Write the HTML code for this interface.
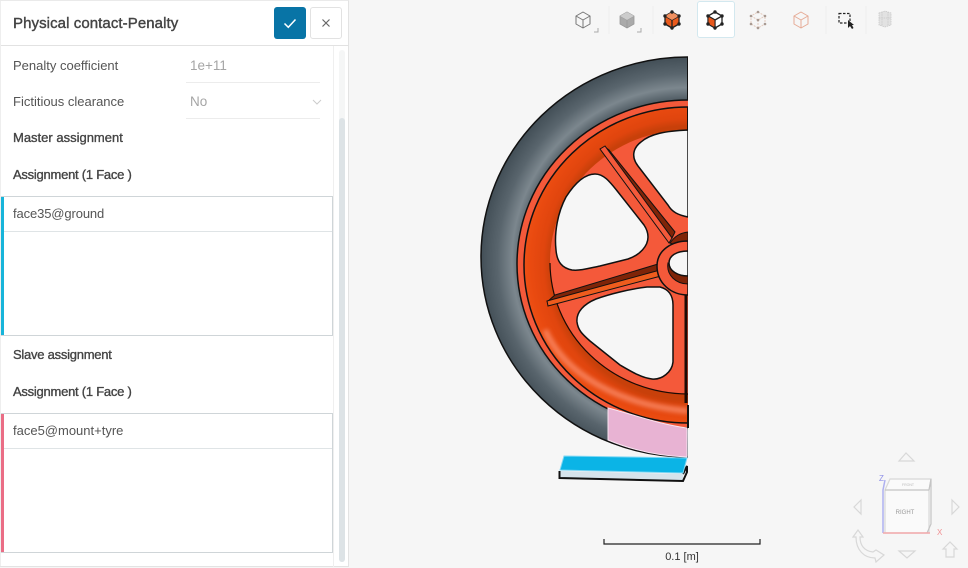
<!DOCTYPE html>
<html><head><meta charset="utf-8">
<style>
html,body{margin:0;padding:0;width:968px;height:568px;overflow:hidden;background:#f6f6f6;font-family:"Liberation Sans",sans-serif;color:#555}
.abs{position:absolute}
#panel{left:0;top:0;width:349px;height:567px;background:#fff;border-right:1px solid #e3e3e3;border-bottom:1px solid #e3e3e3;border-top:1px solid #eaeaea;box-sizing:border-box;box-shadow:inset 1px 0 0 #eee}
.t{position:absolute;left:13px;font-size:13px;line-height:16px;white-space:nowrap}
.b{color:#444;-webkit-text-stroke:.35px #444}
.n{letter-spacing:-.25px}
.f{letter-spacing:-.12px}
.v{position:absolute;left:190px;font-size:13.500px;line-height:16px;color:#a5a5a5}
.l{position:absolute;left:186px;width:134px;height:1px;background:#ececec}
.box{position:absolute;left:1px;width:332px;height:140px;box-sizing:border-box;border:1px solid #cfd5d8;border-left:0;background:#fff}
.bar{position:absolute;left:0;top:0;bottom:0;width:3px}
.sep{position:absolute;left:3px;right:0;top:34px;height:1px;background:#dfe4e6}
</style></head><body>
<div id="panel" class="abs"></div>
<div class="abs" style="left:333px;top:46px;width:1px;height:521px;background:#efefef"></div>
<div class="abs" style="left:339px;top:50px;width:6px;height:512px;background:#f5f6f6;border-radius:3px"></div>
<div class="abs" style="left:339px;top:118px;width:6px;height:444px;background:#dde3e6;border-radius:3px"></div>
<div class="abs" style="left:1px;top:45px;width:348px;height:1px;background:#e2e2e2"></div>
<div class="abs" style="left:13px;top:15px;font-size:15px;line-height:18px;color:#444;-webkit-text-stroke:.4px #444;white-space:nowrap;letter-spacing:.08px">Physical contact-Penalty</div>
<div class="abs" style="left:274px;top:7px;width:32px;height:32px;background:#0874a6;border-radius:3px"><svg width="32" height="32"><path d="M10.500 16.500 14.300 20.300 21.500 12.500" fill="none" stroke="#fff" stroke-width="1.500"/></svg></div>
<div class="abs" style="left:310px;top:7px;width:32px;height:32px;box-sizing:border-box;background:#fff;border:1px solid #e2e2e2;border-radius:3px"><svg width="30" height="30"><path d="M11.500 11.500 18.500 18.500M18.500 11.500 11.500 18.500" fill="none" stroke="#666" stroke-width="1.200"/></svg></div>
<div class="t" style="top:58px">Penalty coefficient</div>
<div class="v" style="top:58px">1e+11</div><div class="l" style="top:82px"></div>
<div class="t" style="top:94px">Fictitious clearance</div>
<div class="v" style="top:94px">No</div><div class="l" style="top:118px"></div>
<svg class="abs" style="left:312px;top:99px" width="10" height="7"><path d="M1 1 5 5 9 1" fill="none" stroke="#ccc" stroke-width="1"/></svg>
<div class="t b" style="top:130px">Master assignment</div>
<div class="t b n" style="top:167px">Assignment (1 Face )</div>
<div class="box" style="top:196px"><div class="bar" style="background:#17b4da"></div><div class="sep"></div><div class="t f" style="left:12px;top:9px">face35@ground</div></div>
<div class="t b n" style="top:347px">Slave assignment</div>
<div class="t b n" style="top:384px">Assignment (1 Face )</div>
<div class="box" style="top:413px"><div class="bar" style="background:#ea6d85"></div><div class="sep"></div><div class="t" style="left:12px;top:9px">face5@mount+tyre</div></div>

<!-- toolbar -->
<div class="abs" style="left:697px;top:1px;width:38px;height:37px;box-sizing:border-box;background:#fff;border:1px solid #d3e8ef;border-radius:3px"></div>
<svg class="abs" style="left:560px;top:0" width="350" height="45">
<defs><g id="cube"><path d="M0-8 7-4V4L0 8-7 4V-4ZM-7-4 0 0 7-4M0 0V8" stroke-linejoin="round"/></g></defs>
<g stroke="#eee" stroke-width="1"><path d="M49 6V34M93 6V34M266 6V34M306 6V34"/></g>
<use href="#cube" x="23" y="20" fill="none" stroke="#777" stroke-width="1"/>
<path d="M38 28V32H34" fill="none" stroke="#aaa"/>
<use href="#cube" x="67" y="20" fill="#aaa" stroke="#999" stroke-width=".8"/>
<path d="M60 16 67 12 74 16 67 20Z" fill="#ccc"/>
<path d="M81 28V32H77" fill="none" stroke="#aaa"/>
<use href="#cube" x="112" y="20" fill="#ea5a1c" stroke="#222" stroke-width="1.300"/>
<path d="M105 16 112 12 119 16 112 20Z" fill="#f09060"/>
<g fill="#222"><circle cx="112" cy="12" r="1.700"/><circle cx="119" cy="16" r="1.700"/><circle cx="119" cy="24" r="1.700"/><circle cx="112" cy="28" r="1.700"/><circle cx="105" cy="24" r="1.700"/><circle cx="105" cy="16" r="1.700"/></g>
<use href="#cube" x="155" y="20" fill="#fff" stroke="#222" stroke-width="1.300"/>
<path d="M148 16 155 20V28L148 24Z" fill="#e8581c" stroke="#222"/>
<g fill="#222"><circle cx="155" cy="12" r="1.700"/><circle cx="162" cy="16" r="1.700"/><circle cx="162" cy="24" r="1.700"/><circle cx="155" cy="28" r="1.700"/><circle cx="148" cy="24" r="1.700"/><circle cx="148" cy="16" r="1.700"/></g>
<use href="#cube" x="198" y="20" fill="none" stroke="#e3cabd" stroke-width="1" stroke-dasharray="2 1"/>
<g fill="#a89a92"><circle cx="198" cy="12" r="1.300"/><circle cx="205" cy="16" r="1.300"/><circle cx="205" cy="24" r="1.300"/><circle cx="198" cy="28" r="1.300"/><circle cx="191" cy="24" r="1.300"/><circle cx="191" cy="16" r="1.300"/><circle cx="198" cy="20" r="1.300"/></g>
<use href="#cube" x="241" y="20" fill="none" stroke="#e6ab96" stroke-width="1"/>
<rect x="279" y="13.500" width="11" height="9.500" fill="none" stroke="#222" stroke-width="1.200" stroke-dasharray="2.500 1.500"/>
<path d="M288 20 288 28 290 26 292 29 293.500 28 292 25 294 25Z" fill="#222"/>
<g fill="#e2e2e2" stroke="#c8c8c8" stroke-width=".8" stroke-dasharray="1.500 .8"><path d="M319 13 325 11 331 13V25L325 27 319 25Z"/><path d="M322 12V26M328 12V26M319 18H331" fill="none"/></g>
</svg>

<!-- wheel -->
<svg class="abs" style="left:0;top:0" width="968" height="568">
<defs>
<radialGradient id="ty" gradientUnits="userSpaceOnUse" cx="688" cy="260" r="207" gradientTransform="translate(688 260) scale(1 .98) translate(-688 -260)">
<stop offset=".78" stop-color="#48545c"/><stop offset=".85" stop-color="#7c878e"/><stop offset=".92" stop-color="#59656d"/><stop offset="1" stop-color="#434f57"/>
</radialGradient>
<radialGradient id="rm" gradientUnits="userSpaceOnUse" cx="688" cy="263" r="165">
<stop offset=".83" stop-color="#c8400a"/><stop offset=".875" stop-color="#e0450e"/><stop offset=".95" stop-color="#e94a10"/><stop offset="1" stop-color="#ee5015"/>
</radialGradient>
<filter id="bl" x="-20%" y="-20%" width="140%" height="140%"><feGaussianBlur stdDeviation="2"/></filter>
<clipPath id="c"><rect x="470" y="50" width="218" height="420"/></clipPath>
<clipPath id="ringc"><path d="M470 263H688V470H470Z"/></clipPath>
<clipPath id="rim"><ellipse cx="688" cy="265" rx="163" ry="157"/></clipPath>
</defs>
<g clip-path="url(#c)" stroke="#111" stroke-width="1.500">
<ellipse cx="688" cy="257" rx="207" ry="200" fill="url(#ty)"/>
<ellipse cx="688" cy="264" rx="171" ry="164" fill="#f4593a"/>
<ellipse cx="688" cy="265" rx="164" ry="158" fill="url(#rm)"/>
<g clip-path="url(#rim)"><path d="M545 330C565 375 620 405 688 411" fill="none" stroke="#f98a68" stroke-width="6" filter="url(#bl)" opacity=".8"/></g>
<ellipse cx="688" cy="262" rx="138" ry="132" fill="#f4593a" stroke="none"/>
<ellipse cx="688" cy="262" rx="138" ry="132" fill="none" stroke="#1a0a04" stroke-width="1.200" clip-path="url(#ringc)"/>
<path d="M688 130C665 131 650 134 641 142 633 148 631 157 638 166L668 205C672 212 678 215 688 217V130Z" fill="#f6f6f6"/>
<path d="M595 174C585 174 575 183 566 197 558 212 554 232 556 250 557 262 562 268 572 270 580 271 590 268 600 266L628 259C640 255 648 246 648 237 648 232 646 228 644 225L618 192C610 182 604 174 595 174Z" fill="#f6f6f6"/>
<path d="M647 287C630 289 610 294 596 299 584 304 576 312 577 322 578 330 582 334 590 341L620 365C632 372 642 378 652 379 662 380 672 372 673 362V305C673 295 668 289 660 287Z" fill="#f6f6f6"/>
<path d="M605 147 609 150 675 232 672 238Z" fill="#7f2408" stroke-width="1"/>
<path d="M600 149 605 146 672 238 669 243Z" fill="#f4593a" stroke-width="1"/>
<path d="M555 295 658 264 661 272 547 302Z" fill="#7f2408" stroke-width="1"/>
<path d="M547 301 660 270 661 276 548 306Z" fill="#ee5c1d" stroke-width="1"/>
<path d="M670 243C675 236 680 233 688 232V250L684 249Z" fill="#7f2408" stroke-width="1"/>
<path d="M688 241C672 241 657 250 657 266 657 283 671 295 688 295Z" fill="#f4593a" stroke-width="1.500"/>
<path d="M668 263C666 275 676 284 688 284V274L680 270Z" fill="#7f2408" stroke-width="1"/>
<path d="M688 251C676 251 669 256 669 263 669 271 678 276 688 276Z" fill="#f6f6f6" stroke-width="1.500"/>
<path d="M686 295V403" stroke="#1a0a04" stroke-width="3" fill="none"/>
<path d="M688 57V100M688 107V130" stroke="#111" stroke-width="2" fill="none"/>
<path d="M608 408C632 414 658 424 687 428L687 457C658 456 632 450 608 440Z" fill="#e8b3d3" stroke="#f8e4f0" stroke-width="1"/>
</g>
<path d="M688 405V428" stroke="#111" stroke-width="2"/>
<path d="M560 471 683 474 683 481 559 478Z" fill="#d6e3eb"/>
<path d="M559.500 471V478L683 481 687 472V466L683 474" fill="none" stroke="#111" stroke-width="2"/>
<path d="M564 456 687 458 683 473 560 470Z" fill="#0bb4e6" stroke="#7fd7f4" stroke-width="1"/>
<!-- scale -->
<path d="M604 539V544H760V539" fill="none" stroke="#222" stroke-width="1.200"/>
<text x="682" y="560" font-family="Liberation Sans, sans-serif" font-size="11" fill="#333" text-anchor="middle">0.1 [m]</text>
<!-- view cube -->
<g fill="none" stroke="#d8d8d8" stroke-width="1.200">
<path d="M899 461 906 453 914 461Z"/><path d="M899 551 907 558 915 551Z"/>
<path d="M861 500 854 507 861 514Z"/><path d="M952 500 959 507 952 514Z"/>
<path d="M885 490 890 479 931 479 929 490V533H885Z" fill="#fafafa"/>
<path d="M885 490H929M929 490 931 479V524L927 533" stroke="#c4c4c4"/>
<path d="M853 537 858 530 863 537 860 537C860 545 864 551 873 552L876 550 884 555 876 562 875 558C864 558 856 550 856 537Z"/>
<path d="M943 549 950 542 957 549H954V557H946V549Z"/>
</g>
<path d="M883 533V490L885 480" stroke="#aeb0f0" stroke-width="1.500" fill="none"/>
<path d="M883 533H930" stroke="#f3a9ab" stroke-width="1.500" fill="none"/>
<text x="879" y="481" font-family="Liberation Sans, sans-serif" font-size="8" fill="#8f90e8">Z</text>
<text x="937" y="535" font-family="Liberation Sans, sans-serif" font-size="8" fill="#f08f92">X</text>
<text x="905" y="514" font-family="Liberation Sans, sans-serif" font-size="6" fill="#999" text-anchor="middle">RIGHT</text>
<text x="908" y="486" font-family="Liberation Sans, sans-serif" font-size="3.500" fill="#bbb" text-anchor="middle">FRONT</text>
</svg>
</body></html>
